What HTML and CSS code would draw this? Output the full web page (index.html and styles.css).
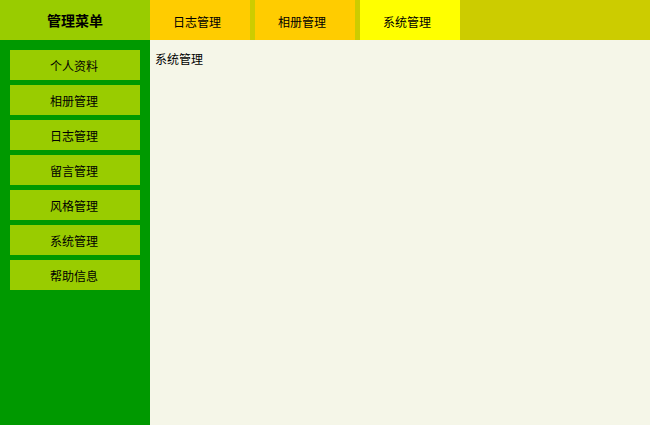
FILE: index.html
```html
<!DOCTYPE html>
<html lang="zh">
<head>
<meta charset="utf-8">
<title>管理菜单</title>
<link rel="stylesheet" href="styles.css">
</head>
<body>
<div class="page">
  <aside class="sidebar">
    <div class="side-title">管理菜单</div>
    <ul class="menu">
      <li class="menu-item">个人资料</li>
      <li class="menu-item">相册管理</li>
      <li class="menu-item">日志管理</li>
      <li class="menu-item">留言管理</li>
      <li class="menu-item">风格管理</li>
      <li class="menu-item">系统管理</li>
      <li class="menu-item">帮助信息</li>
    </ul>
  </aside>
  <main class="main">
    <nav class="tabs">
      <div class="tab">日志管理</div>
      <div class="tab">相册管理</div>
      <div class="tab tab-active">系统管理</div>
    </nav>
    <div class="content">系统管理</div>
  </main>
</div>
</body>
</html>
```

FILE: styles.css
```css
* { box-sizing: border-box; }
html, body { margin: 0; padding: 0; height: 100%; }
body {
  font-family: "Noto Sans CJK SC", "DejaVu Sans", sans-serif;
  font-size: 12px;
  color: #000;
}
.page {
  display: flex;
  width: 650px;
  height: 425px;
}
.sidebar {
  width: 150px;
  flex: none;
  background: #009900;
  display: flex;
  flex-direction: column;
}
.side-title {
  height: 40px;
  background: #99cc00;
  display: flex;
  align-items: center;
  justify-content: center;
  font-size: 14px;
  font-weight: bold;
  color: #000;
}
.menu {
  list-style: none;
  margin: 0;
  padding: 10px 10px 0;
  display: flex;
  flex-direction: column;
  gap: 5px;
}
.menu-item {
  height: 30px;
  background: #99cc00;
  display: flex;
  align-items: center;
  justify-content: center;
  padding-right: 2px;
}
.main {
  flex: 1;
  display: flex;
  flex-direction: column;
  background: #f5f6e8;
}
.tabs {
  height: 40px;
  background: #cccc00;
  display: flex;
  gap: 5px;
}
.tab {
  width: 100px;
  background: #ffcc00;
  display: flex;
  align-items: center;
  justify-content: center;
  padding-right: 6px;
  padding-top: 2px;
}
.tab-active {
  background: #ffff00;
}
.content {
  flex: 1;
  padding: 11px 5px;
  line-height: 16px;
}
```
